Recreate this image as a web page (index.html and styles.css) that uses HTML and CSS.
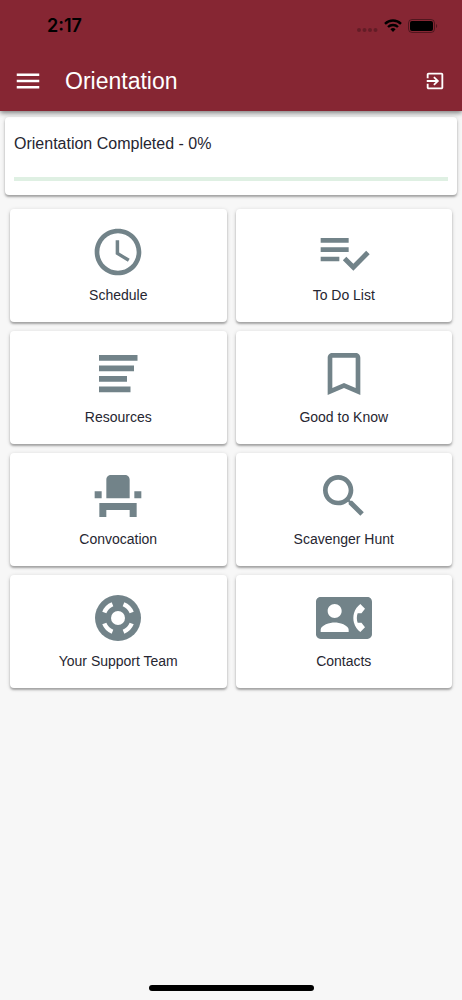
FILE: index.html
```html
<!DOCTYPE html>
<html lang="en">
<head>
  <meta charset="UTF-8">
  <meta name="viewport" content="width=device-width, initial-scale=1.0">
  <title>Orientation</title>
  <link rel="stylesheet" href="styles.css">
</head>
<body>
  <header class="header">
    <div class="status-bar">
      <span class="time">2:17</span>
      <div class="status-icons">
        <svg class="signal" viewBox="0 0 21 4" aria-hidden="true">
          <circle cx="2" cy="2" r="2"/><circle cx="7.5" cy="2" r="2"/><circle cx="13" cy="2" r="2"/><circle cx="18.5" cy="2" r="2"/>
        </svg>
        <svg class="wifi" viewBox="0 0 18 13" aria-hidden="true">
          <path d="M1 4.8a11.5 11.5 0 0 1 16 0M4 8a7.2 7.2 0 0 1 10 0" fill="none" stroke="#000" stroke-width="2.4"/>
          <path d="M9 13l2.6-2.7a3.8 3.8 0 0 0-5.2 0z"/>
        </svg>
        <svg class="battery" viewBox="0 0 30 14" aria-hidden="true">
          <rect x=".5" y=".5" width="26" height="13" rx="3.5" fill="none" stroke="#000" stroke-opacity=".4"/>
          <rect x="2" y="2" width="23" height="10" rx="2"/>
          <path d="M28 5v4c1.6-.5 1.6-3.5 0-4z" fill-opacity=".4"/>
        </svg>
      </div>
    </div>
    <div class="toolbar">
      <button class="icon-btn" type="button" aria-label="Menu">
        <svg class="menu-icon" viewBox="0 0 24 24"><path d="M3 18h18v-2H3v2zm0-5h18v-2H3v2zm0-7v2h18V6H3z"/></svg>
      </button>
      <h1>Orientation</h1>
      <button class="icon-btn" type="button" aria-label="Exit">
        <svg class="exit-icon" viewBox="0 0 24 24"><path d="M10.09 15.59L11.5 17l5-5-5-5-1.41 1.41L12.67 11H3v2h9.67l-2.58 2.59zM19 3H5c-1.11 0-2 .9-2 2v4h2V5h14v14H5v-4H3v4c0 1.1.89 2 2 2h14c1.1 0 2-.9 2-2V5c0-1.1-.9-2-2-2z"/></svg>
      </button>
    </div>
  </header>

  <main>
    <section class="card progress-card">
      <label for="completed">Orientation Completed - 0%</label>
      <progress id="completed" value="0" max="100"></progress>
    </section>

    <nav class="tiles">
      <a class="card tile" href="#schedule">
        <svg viewBox="0 0 24 24"><path d="M11.99 2C6.47 2 2 6.48 2 12s4.47 10 9.99 10C17.52 22 22 17.52 22 12S17.52 2 11.99 2zM12 20c-4.42 0-8-3.58-8-8s3.58-8 8-8 8 3.58 8 8-3.58 8-8 8zm.5-13H11v6l5.25 3.15.75-1.23-4.5-2.67z"/></svg>
        <span>Schedule</span>
      </a>
      <a class="card tile" href="#todo">
        <svg viewBox="0 0 24 24"><path d="M14 10H2v2h12v-2zm0-4H2v2h12V6zM2 16h8v-2H2v2zm19.5-4.5L23 13l-6.99 7-4.51-4.5L13 14l3.01 3 5.49-5.5z"/></svg>
        <span>To Do List</span>
      </a>
      <a class="card tile" href="#resources">
        <svg viewBox="0 0 56 56"><path d="M9 9h38.5v5.8H9zM9 19.5h35v5.8H9zM9 30h28v5.8H9zM9 40.5h31.5v5.8H9z"/></svg>
        <span>Resources</span>
      </a>
      <a class="card tile" href="#good-to-know">
        <svg viewBox="0 0 24 24"><path d="M17 3H7c-1.1 0-1.99.9-1.99 2L5 21l7-3 7 3V5c0-1.1-.9-2-2-2zm0 15l-5-2.18L7 18V5h10v13z"/></svg>
        <span>Good to Know</span>
      </a>
      <a class="card tile" href="#convocation">
        <svg viewBox="0 0 24 24"><path d="M4 15v6h3v-3h10v3h3v-6H4zm15-5h3v3h-3zM2 10h3v3H2zm15 3H7V5c0-1.1.9-2 2-2h6c1.1 0 2 .9 2 2v8z"/></svg>
        <span>Convocation</span>
      </a>
      <a class="card tile" href="#scavenger-hunt">
        <svg viewBox="0 0 24 24"><path d="M15.5 14h-.79l-.28-.27C15.41 12.59 16 11.11 16 9.5 16 5.91 13.09 3 9.5 3S3 5.91 3 9.5 5.91 16 9.5 16c1.61 0 3.09-.59 4.23-1.57l.27.28v.79l5 4.99L20.49 19l-4.99-5zm-6 0C7.01 14 5 11.99 5 9.5S7.01 5 9.5 5 14 7.01 14 9.5 11.99 14 9.5 14z"/></svg>
        <span>Scavenger Hunt</span>
      </a>
      <a class="card tile" href="#support">
        <svg viewBox="0 0 56 56">
          <circle cx="28" cy="28" r="23"/>
          <circle cx="28" cy="28" r="7" fill="#fff"/>
          <path d="M41.7 33.5A14.8 14.8 0 0 1 33.5 41.7M22.5 41.7A14.8 14.8 0 0 1 14.3 33.5M14.3 22.5A14.8 14.8 0 0 1 22.5 14.3M33.5 14.3A14.8 14.8 0 0 1 41.7 22.5" fill="none" stroke="#fff" stroke-width="4.4"/>
        </svg>
        <span>Your Support Team</span>
      </a>
      <a class="card tile" href="#contacts">
        <svg viewBox="0 0 24 24"><path d="M22 3H2C.9 3 0 3.9 0 5v14c0 1.1.9 2 2 2h20c1.1 0 1.99-.9 1.99-2L24 5c0-1.1-.9-2-2-2zM8 6c1.66 0 3 1.34 3 3s-1.34 3-3 3-3-1.34-3-3 1.34-3 3-3zm6 12H2v-1c0-2 4-3.1 6-3.1s6 1.1 6 3.1v1zm3.85-4h1.64L21 16l-1.99 1.99c-1.31-.98-2.28-2.38-2.73-3.99-.18-.64-.28-1.31-.28-2s.1-1.36.28-2c.45-1.62 1.42-3.01 2.73-3.99L21 8l-1.51 2h-1.64c-.22.63-.35 1.3-.35 2s.13 1.37.35 2z"/></svg>
        <span>Contacts</span>
      </a>
    </nav>
  </main>

  <footer class="home-bar"><div></div></footer>
</body>
</html>
```
FILE: styles.css
```css
:root {
  --primary: #862633;
  --bg-color: #f7f7f7;
  --text-color: #262631;
  --icon-color: #728389;
}

* {
  box-sizing: border-box;
}

body {
  display: flex;
  flex-direction: column;
  min-height: 100vh;
  margin: 0;
  background: var(--bg-color);
  color: var(--text-color);
  font-family: "Liberation Sans", Arial, sans-serif;
}

.header {
  position: relative;
  z-index: 1;
  background: var(--primary);
  box-shadow: 0 2px 5px rgba(0, 0, 0, 0.5);
}

.status-bar {
  display: flex;
  align-items: center;
  justify-content: space-between;
  height: 51px;
  padding: 0 24px 0 47px;
}

.time {
  color: #000;
  font: 600 18px "Inter", sans-serif;
}

.status-icons {
  display: flex;
  align-items: center;
  gap: 6px;
}

.signal {
  width: 21px;
  height: 4px;
  margin-top: 9px;
  opacity: 0.25;
}

.wifi {
  width: 18px;
  height: 13px;
}

.battery {
  width: 30px;
  height: 14px;
}

.toolbar {
  display: flex;
  align-items: center;
  height: 60px;
  padding: 0 16px 0 13px;
}

.toolbar h1 {
  flex: 1;
  margin: 0 0 0 22px;
  color: #fff;
  font-size: 23px;
  font-weight: 400;
}

.icon-btn {
  display: flex;
  padding: 0;
  border: 0;
  background: none;
  fill: #fff;
  cursor: pointer;
}

.menu-icon {
  width: 30px;
  height: 30px;
}

.exit-icon {
  width: 22px;
  height: 22px;
}

.card {
  background: #fff;
  border-radius: 4px;
  box-shadow: 0 2px 2px rgba(0, 0, 0, 0.26), 0 1px 4px rgba(0, 0, 0, 0.16);
}

.progress-card {
  margin: 6px 5px 0;
  padding: 17px 9px 14px;
}

.progress-card label {
  display: block;
  font-size: 16px;
  line-height: 20px;
}

progress {
  display: block;
  width: 100%;
  height: 4px;
  margin-top: 23px;
  border: 0;
  appearance: none;
}

progress::-webkit-progress-bar {
  background: #dff0e3;
}

progress::-webkit-progress-value {
  background: #2dae53;
}

.tiles {
  display: grid;
  grid-template-columns: 1fr 1fr;
  gap: 9px;
  padding: 14px 10px;
}

.tile {
  display: flex;
  flex-direction: column;
  align-items: center;
  padding: 15px 8px 18px;
  color: inherit;
  font-size: 14px;
  line-height: 18px;
  text-decoration: none;
}

.tile svg {
  width: 56px;
  height: 56px;
  margin-bottom: 6px;
  fill: var(--icon-color);
}

.home-bar {
  display: flex;
  justify-content: center;
  margin-top: auto;
  padding-bottom: 9px;
}

.home-bar div {
  width: 165px;
  height: 6px;
  border-radius: 3px;
  background: #000;
}
```
